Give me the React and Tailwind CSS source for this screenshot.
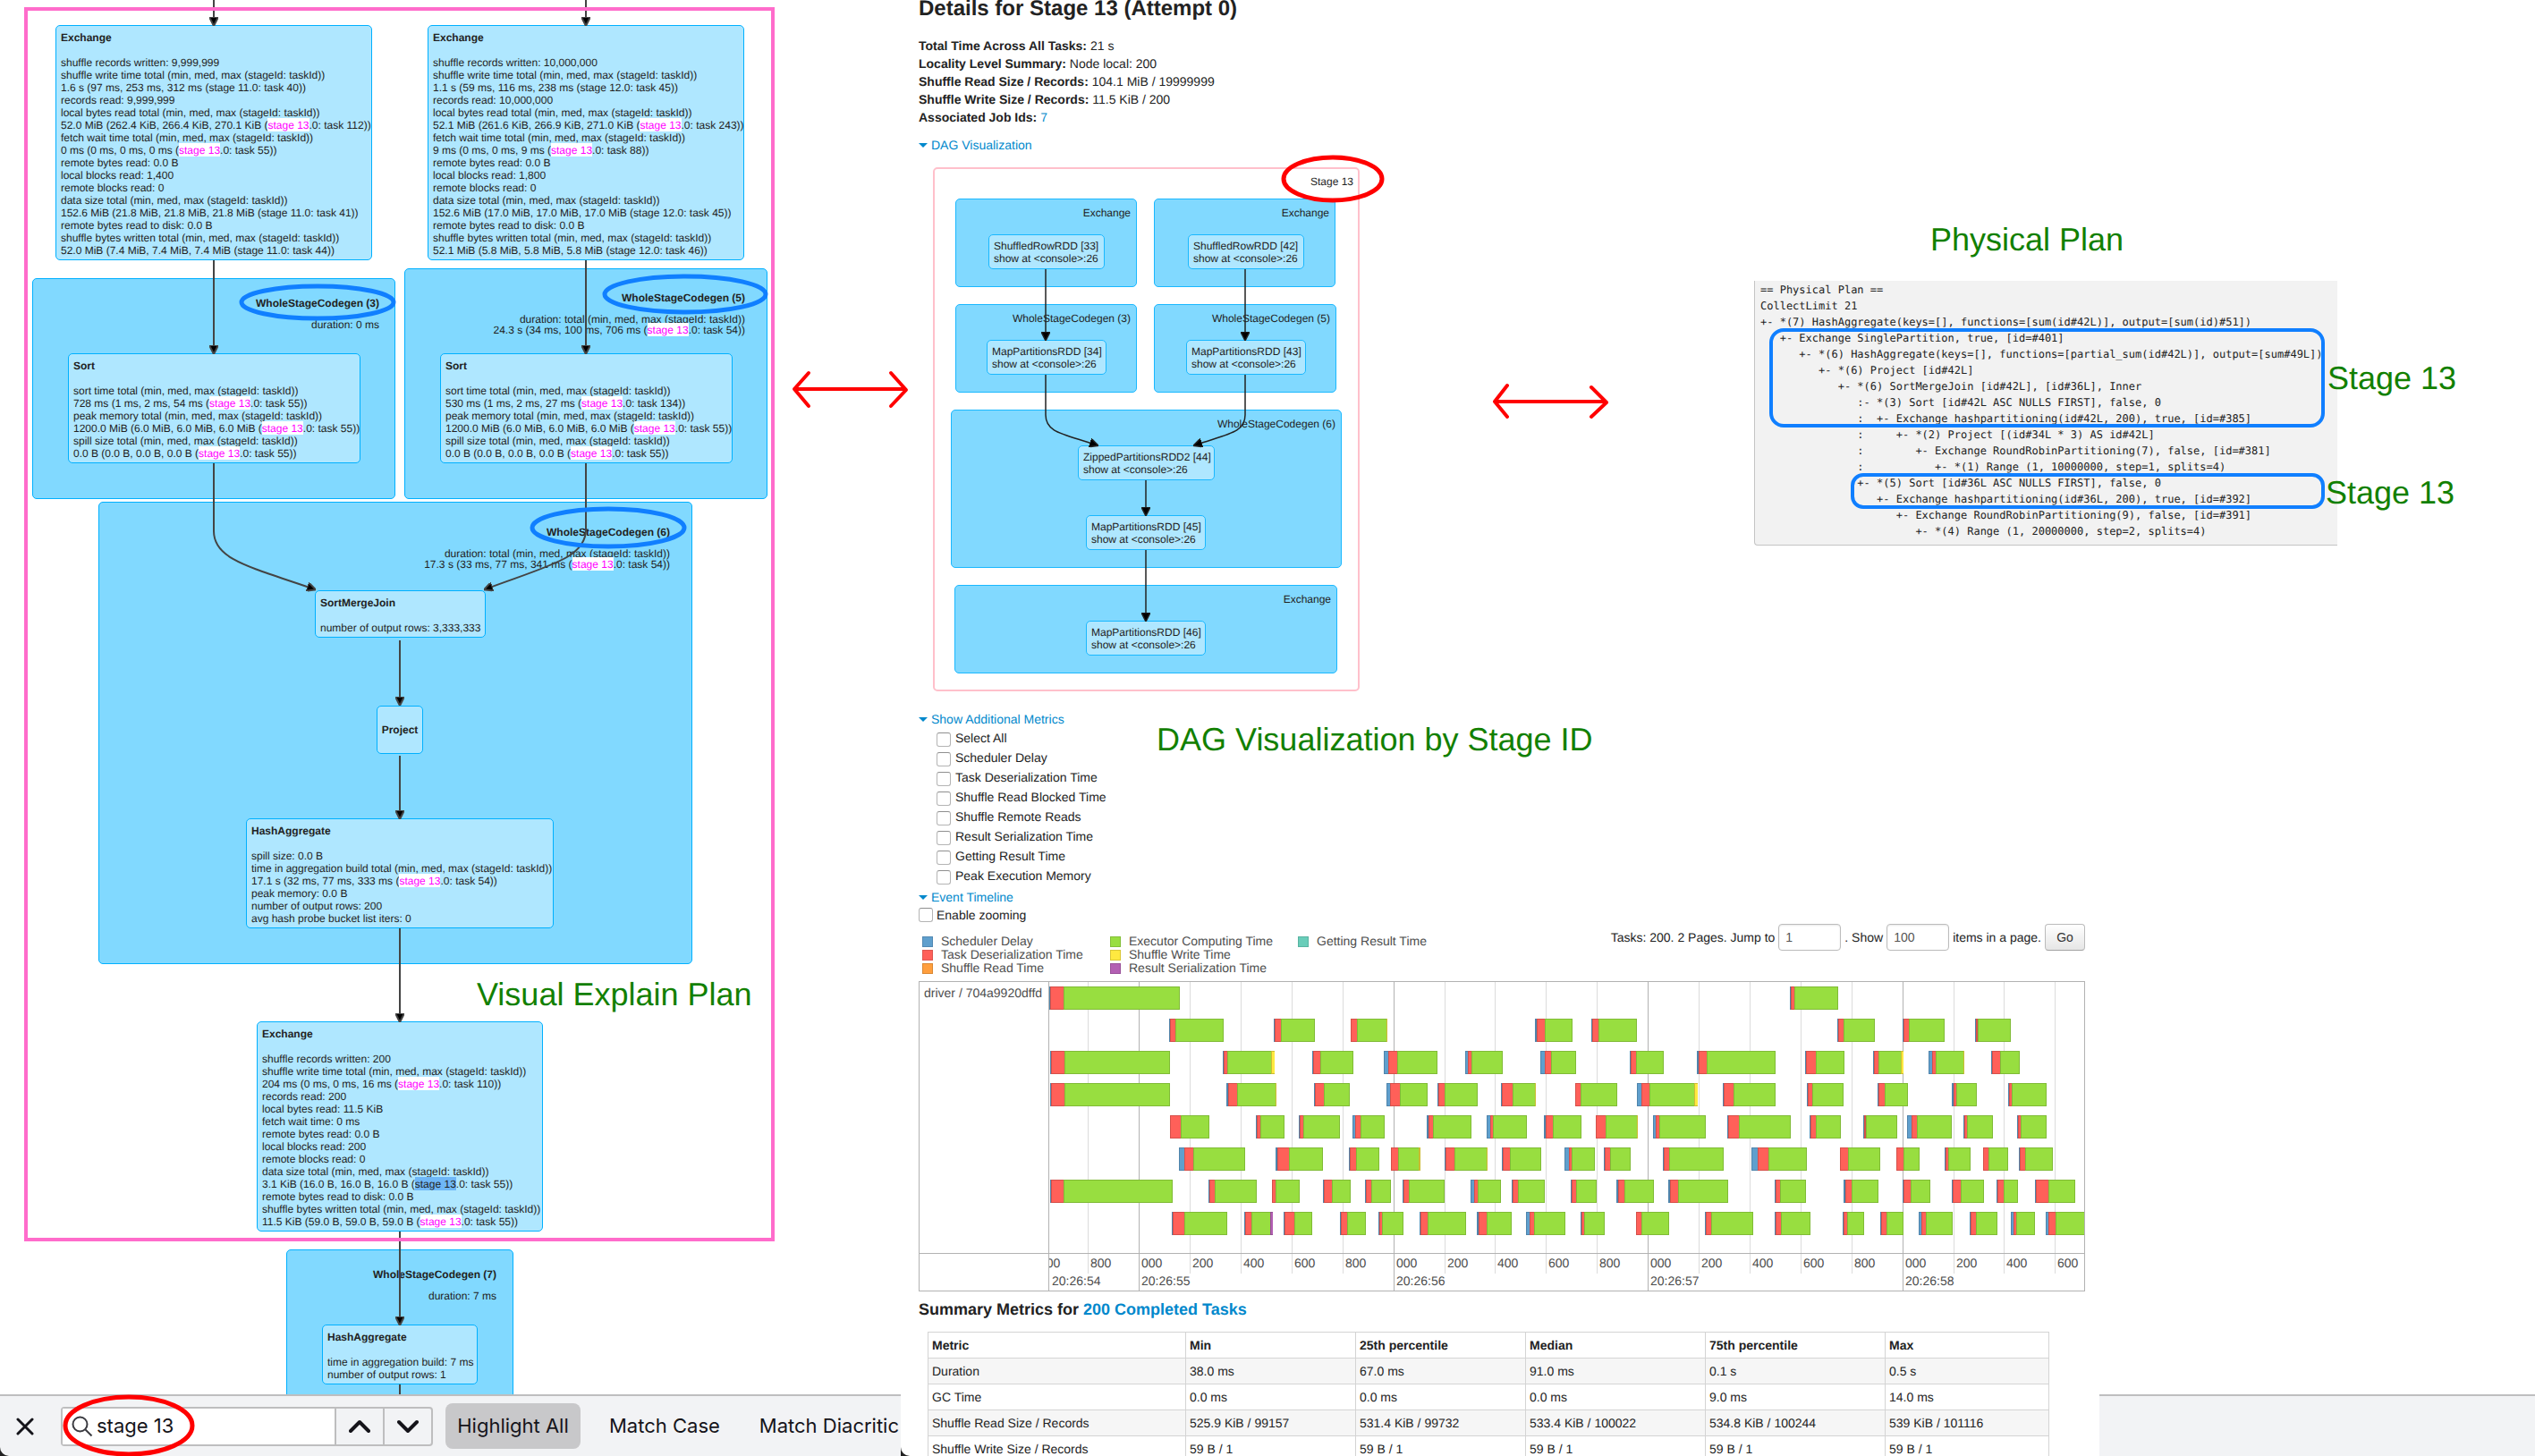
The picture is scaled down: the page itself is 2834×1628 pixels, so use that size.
import React from "react";

const FIND = "stage 13";

/* ---------- shared pieces ---------- */

function Marked({ text }) {
  const selected = text.startsWith("~");
  const line = selected ? text.slice(1) : text;
  const at = line.indexOf(FIND);
  if (at < 0) return line;
  return (
    <>
      {line.slice(0, at)}
      <mark className={selected ? "bg-[#6fb7f7] text-[#222222] pt-px" : "bg-white text-[#ff00ff] pt-px"}>{FIND}</mark>
      {line.slice(at + FIND.length)}
    </>
  );
}

function Cluster({ x, y, w, h }) {
  return (
    <div
      className="absolute rounded-[5px] border border-[#00b0ff] bg-[#81d9ff]"
      style={{ left: x, top: y, width: w, height: h }}
    />
  );
}

function ArrowHead({ id }) {
  return (
    <marker id={id} viewBox="0 0 10 10" refX="9" refY="5" markerUnits="userSpaceOnUse" markerWidth="10" markerHeight="10" orient="auto">
      <path d="M0 0 L10 5 L0 10 Z" fill="#000" />
    </marker>
  );
}

/* ---------- query plan graph ---------- */

const planClusters = [
  { x: 36, y: 311, w: 406, h: 247, right: 424, ly: 332, name: "WholeStageCodegen (3)", lines: ["duration: 0 ms"] },
  {
    x: 452, y: 300, w: 406, h: 258, right: 833, ly: 326, name: "WholeStageCodegen (5)",
    lines: ["duration: total (min, med, max (stageId: taskId))", "24.3 s (34 ms, 100 ms, 706 ms (stage 13.0: task 54))"],
  },
  {
    x: 110, y: 561, w: 664, h: 517, right: 749, ly: 588, name: "WholeStageCodegen (6)",
    lines: ["duration: total (min, med, max (stageId: taskId))", "17.3 s (33 ms, 77 ms, 341 ms (stage 13.0: task 54))"],
  },
  { x: 320, y: 1397, w: 254, h: 200, right: 555, ly: 1418, name: "WholeStageCodegen (7)", lines: ["duration: 7 ms"] },
];

const planNodes = [
  {
    x: 62, y: 28, w: 354, name: "Exchange",
    lines: [
      "shuffle records written: 9,999,999",
      "shuffle write time total (min, med, max (stageId: taskId))",
      "1.6 s (97 ms, 253 ms, 312 ms (stage 11.0: task 40))",
      "records read: 9,999,999",
      "local bytes read total (min, med, max (stageId: taskId))",
      "52.0 MiB (262.4 KiB, 266.4 KiB, 270.1 KiB (stage 13.0: task 112))",
      "fetch wait time total (min, med, max (stageId: taskId))",
      "0 ms (0 ms, 0 ms, 0 ms (stage 13.0: task 55))",
      "remote bytes read: 0.0 B",
      "local blocks read: 1,400",
      "remote blocks read: 0",
      "data size total (min, med, max (stageId: taskId))",
      "152.6 MiB (21.8 MiB, 21.8 MiB, 21.8 MiB (stage 11.0: task 41))",
      "remote bytes read to disk: 0.0 B",
      "shuffle bytes written total (min, med, max (stageId: taskId))",
      "52.0 MiB (7.4 MiB, 7.4 MiB, 7.4 MiB (stage 11.0: task 44))",
    ],
  },
  {
    x: 478, y: 28, w: 354, name: "Exchange",
    lines: [
      "shuffle records written: 10,000,000",
      "shuffle write time total (min, med, max (stageId: taskId))",
      "1.1 s (59 ms, 116 ms, 238 ms (stage 12.0: task 45))",
      "records read: 10,000,000",
      "local bytes read total (min, med, max (stageId: taskId))",
      "52.1 MiB (261.6 KiB, 266.9 KiB, 271.0 KiB (stage 13.0: task 243))",
      "fetch wait time total (min, med, max (stageId: taskId))",
      "9 ms (0 ms, 0 ms, 9 ms (stage 13.0: task 88))",
      "remote bytes read: 0.0 B",
      "local blocks read: 1,800",
      "remote blocks read: 0",
      "data size total (min, med, max (stageId: taskId))",
      "152.6 MiB (17.0 MiB, 17.0 MiB, 17.0 MiB (stage 12.0: task 45))",
      "remote bytes read to disk: 0.0 B",
      "shuffle bytes written total (min, med, max (stageId: taskId))",
      "52.1 MiB (5.8 MiB, 5.8 MiB, 5.8 MiB (stage 12.0: task 46))",
    ],
  },
  {
    x: 76, y: 395, w: 327, name: "Sort",
    lines: [
      "sort time total (min, med, max (stageId: taskId))",
      "728 ms (1 ms, 2 ms, 54 ms (stage 13.0: task 55))",
      "peak memory total (min, med, max (stageId: taskId))",
      "1200.0 MiB (6.0 MiB, 6.0 MiB, 6.0 MiB (stage 13.0: task 55))",
      "spill size total (min, med, max (stageId: taskId))",
      "0.0 B (0.0 B, 0.0 B, 0.0 B (stage 13.0: task 55))",
    ],
  },
  {
    x: 492, y: 395, w: 327, name: "Sort",
    lines: [
      "sort time total (min, med, max (stageId: taskId))",
      "530 ms (1 ms, 2 ms, 27 ms (stage 13.0: task 134))",
      "peak memory total (min, med, max (stageId: taskId))",
      "1200.0 MiB (6.0 MiB, 6.0 MiB, 6.0 MiB (stage 13.0: task 55))",
      "spill size total (min, med, max (stageId: taskId))",
      "0.0 B (0.0 B, 0.0 B, 0.0 B (stage 13.0: task 55))",
    ],
  },
  { x: 352, y: 660, w: 191, name: "SortMergeJoin", lines: ["number of output rows: 3,333,333"] },
  {
    x: 275, y: 915, w: 344, name: "HashAggregate",
    lines: [
      "spill size: 0.0 B",
      "time in aggregation build total (min, med, max (stageId: taskId))",
      "17.1 s (32 ms, 77 ms, 333 ms (stage 13.0: task 54))",
      "peak memory: 0.0 B",
      "number of output rows: 200",
      "avg hash probe bucket list iters: 0",
    ],
  },
  {
    x: 287, y: 1142, w: 320, name: "Exchange",
    lines: [
      "shuffle records written: 200",
      "shuffle write time total (min, med, max (stageId: taskId))",
      "204 ms (0 ms, 0 ms, 16 ms (stage 13.0: task 110))",
      "records read: 200",
      "local bytes read: 11.5 KiB",
      "fetch wait time: 0 ms",
      "remote bytes read: 0.0 B",
      "local blocks read: 200",
      "remote blocks read: 0",
      "data size total (min, med, max (stageId: taskId))",
      "~3.1 KiB (16.0 B, 16.0 B, 16.0 B (stage 13.0: task 55))",
      "remote bytes read to disk: 0.0 B",
      "shuffle bytes written total (min, med, max (stageId: taskId))",
      "11.5 KiB (59.0 B, 59.0 B, 59.0 B (stage 13.0: task 55))",
    ],
  },
  { x: 360, y: 1481, w: 174, name: "HashAggregate", lines: ["time in aggregation build: 7 ms", "number of output rows: 1"] },
];

const planEdges = [
  "M239 0 V28",
  "M655 0 V28",
  "M239 291 V395",
  "M655 291 V395",
  "M447 716 V788",
  "M447 845 V915",
  "M447 1038 V1142",
  "M447 1377 V1481",
  "M239 518 V594 C239 626 280 634 352 659",
  "M655 518 V592 C655 624 614 632 542 659",
];

function PlanGraph() {
  return (
    <section className="relative min-h-0 flex-1 overflow-hidden whitespace-nowrap bg-white text-xs text-[#222222]">
      {planClusters.map((c) => (
        <Cluster key={c.name} {...c} />
      ))}
      {planClusters.map((c) => (
        <div key={c.name} className="absolute text-right" style={{ left: c.x, top: c.ly, width: c.right - c.x }}>
          <h3 className="font-bold leading-[14px]">{c.name}</h3>
          <div className="mt-[11px] leading-3">
            {c.lines.map((l) => (
              <p key={l}><Marked text={l} /></p>
            ))}
          </div>
        </div>
      ))}
      {planNodes.map((n, i) => (
        <article
          key={i}
          className="absolute rounded-[5px] border border-[#00b0ff] bg-[#afe7ff] px-[5px] pt-[6px] pb-[3px] leading-[14px]"
          style={{ left: n.x, top: n.y, width: n.w }}
        >
          <h3 className="mb-[14px] font-bold">{n.name}</h3>
          {n.lines.map((l, k) => (
            <p key={k}><Marked text={l} /></p>
          ))}
        </article>
      ))}
      <article
        className="absolute flex items-center justify-center rounded-[5px] border border-[#00b0ff] bg-[#afe7ff] font-bold"
        style={{ left: 421, top: 789, width: 52, height: 54 }}
      >
        Project
      </article>
      <svg className="absolute inset-0 h-full w-full" fill="none" stroke="#444" strokeWidth="2">
        <defs><ArrowHead id="plan-arrow" /></defs>
        {planEdges.map((d) => (
          <path key={d} d={d} markerEnd="url(#plan-arrow)" />
        ))}
        <path d="M447 1548 V1600" />
      </svg>
      <div className="absolute border-4 border-[#ff6ccb]" style={{ left: 27, top: 8, width: 839, height: 1380 }} />
      <p className="absolute text-4xl text-[#128000]" style={{ left: 533, top: 1092 }}>Visual Explain Plan</p>
    </section>
  );
}

function FindBar() {
  return (
    <form className="flex h-[69px] shrink-0 items-center overflow-hidden whitespace-nowrap border-t-2 border-[#bebebf] bg-[#f2f3f5] font-[Inter,sans-serif] text-[22px] text-[#15141a]">
      <button type="button" aria-label="Close find bar" className="ml-[18px] shrink-0">
        <svg className="h-5 w-5" viewBox="0 0 20 20" fill="none" stroke="currentColor" strokeWidth="3" strokeLinecap="round">
          <path d="M2 2 L18 18 M18 2 L2 18" />
        </svg>
      </button>
      <div className="ml-[30px] flex h-11 w-[416px] shrink-0 rounded border-2 border-[#bebebf]">
        <label className="flex flex-1 items-center bg-white pl-[10px]">
          <svg className="h-6 w-6 shrink-0" viewBox="0 0 24 24" fill="none" stroke="#3a3a40" strokeWidth="2">
            <circle cx="9.500" cy="9.500" r="8" />
            <path d="M15.500 15.500 L22.500 22.500" />
          </svg>
          <input aria-label="Find in page" defaultValue="stage 13" className="ml-1 w-0 flex-1 bg-transparent outline-none" />
        </label>
        <button type="button" aria-label="Previous match" className="flex w-[54px] items-center justify-center border-l-2 border-[#bebebf]">
          <svg className="h-4 w-6" viewBox="0 0 24 16" fill="none" stroke="currentColor" strokeWidth="4" strokeLinecap="round" strokeLinejoin="round">
            <path d="M2 13 L12 3 L22 13" />
          </svg>
        </button>
        <button type="button" aria-label="Next match" className="flex w-[54px] items-center justify-center border-l-2 border-[#bebebf]">
          <svg className="h-4 w-6" viewBox="0 0 24 16" fill="none" stroke="currentColor" strokeWidth="4" strokeLinecap="round" strokeLinejoin="round">
            <path d="M2 3 L12 13 L22 3" />
          </svg>
        </button>
      </div>
      <button type="button" className="ml-[14px] h-[51px] w-[151px] shrink-0 rounded-lg bg-[#c8c8ca]">Highlight All</button>
      <button type="button" className="ml-8 shrink-0">Match Case</button>
      <button type="button" className="ml-11 shrink-0">Match Diacritic</button>
    </form>
  );
}

/* ---------- stage page ---------- */

const facts = [
  ["Total Time Across All Tasks:", "21 s"],
  ["Locality Level Summary:", "Node local: 200"],
  ["Shuffle Read Size / Records:", "104.1 MiB / 19999999"],
  ["Shuffle Write Size / Records:", "11.5 KiB / 200"],
];

const dagClusters = [
  { x: 41, y: 50, w: 203, h: 99, name: "Exchange" },
  { x: 263, y: 50, w: 203, h: 99, name: "Exchange" },
  { x: 41, y: 168, w: 203, h: 99, name: "WholeStageCodegen (3)" },
  { x: 263, y: 168, w: 204, h: 99, name: "WholeStageCodegen (5)" },
  { x: 36, y: 286, w: 437, h: 177, name: "WholeStageCodegen (6)" },
  { x: 40, y: 482, w: 428, h: 99, name: "Exchange" },
];

const dagNodes = [
  { x: 78, y: 90, w: 130, name: "ShuffledRowRDD [33]" },
  { x: 301, y: 90, w: 130, name: "ShuffledRowRDD [42]" },
  { x: 76, y: 208, w: 134, name: "MapPartitionsRDD [34]" },
  { x: 299, y: 208, w: 134, name: "MapPartitionsRDD [43]" },
  { x: 178, y: 326, w: 153, name: "ZippedPartitionsRDD2 [44]" },
  { x: 187, y: 404, w: 134, name: "MapPartitionsRDD [45]" },
  { x: 187, y: 522, w: 134, name: "MapPartitionsRDD [46]" },
];

const dagEdges = [
  "M142 129 V208",
  "M365 129 V208",
  "M142 247 V292 C142 312 162 313 200 326",
  "M365 247 V292 C365 312 346 313 308 326",
  "M254 365 V404",
  "M254 443 V522",
];

function StageDag() {
  return (
    <div className="relative h-[622px] whitespace-nowrap text-xs text-[#222222]">
      <div className="absolute rounded-[5px] border-2 border-[#ffc0cb]" style={{ left: 16, top: 15, width: 477, height: 586 }}>
        <p className="pr-[5px] pt-[7px] text-right leading-[14px]">Stage 13</p>
      </div>
      {dagClusters.map((c, i) => (
        <div
          key={i}
          className="absolute rounded-[5px] border border-[#1ab8ff] bg-[#81d9ff] pt-2 pr-[6px] text-right leading-[14px]"
          style={{ left: c.x, top: c.y, width: c.w, height: c.h }}
        >
          {c.name}
        </div>
      ))}
      {dagNodes.map((n) => (
        <div
          key={n.name}
          className="absolute rounded-[5px] border border-[#1ab8ff] bg-[#afe7ff] px-[5px] pt-[5px] pb-1 leading-[14px]"
          style={{ left: n.x, top: n.y, width: n.w }}
        >
          <p>{n.name}</p>
          <p>{"show at <console>:26"}</p>
        </div>
      ))}
      <svg className="absolute inset-0 h-full w-full" fill="none" stroke="#222" strokeWidth="1.500">
        <defs><ArrowHead id="dag-arrow" /></defs>
        {dagEdges.map((d) => (
          <path key={d} d={d} markerEnd="url(#dag-arrow)" />
        ))}
      </svg>
    </div>
  );
}

function Toggle({ children }) {
  return (
    <a href="#" className="flex items-center gap-1 leading-5 text-[#0088cc]">
      <svg className="h-[5px] w-[10px]" viewBox="0 0 10 5"><path d="M0 0 H10 L5 5 Z" fill="currentColor" /></svg>
      {children}
    </a>
  );
}

const metricNames = [
  "Select All", "Scheduler Delay", "Task Deserialization Time", "Shuffle Read Blocked Time",
  "Shuffle Remote Reads", "Result Serialization Time", "Getting Result Time", "Peak Execution Memory",
];

const boxClass = "h-4 w-4 shrink-0 appearance-none rounded-[3px] border border-[#b4b4b4] border-t-[#8f8f8f] bg-white";

const legend = [
  ["Scheduler Delay", "bg-[#5f9fcd] border-[#5289b3]"],
  ["Executor Computing Time", "bg-[#98de40] border-[#83bf38]"],
  ["Getting Result Time", "bg-[#69cdb9] border-[#58b3a1]"],
  ["Task Deserialization Time", "bg-[#ff6059] border-[#dd5650]"],
  ["Shuffle Write Time", "bg-[#ffe940] border-[#d9c636]"],
  ["", ""],
  ["Shuffle Read Time", "bg-[#ff9e3d] border-[#d98834]"],
  ["Result Serialization Time", "bg-[#b35fb3] border-[#9a529a]"],
];

/* Each task: start, deserialization start, computing start, end, optional tail [start, colour key]. */
const taskRows = [
  [[0, 1, 16, 146], [828, 829, 833, 882]],
  [[134, 135, 141, 195], [251, 252, 259, 297], [337, 337, 344, 378, 377, "y"], [543, 545, 554, 585], [606, 607, 614, 657], [881, 882, 888, 923], [954, 955, 961, 1001], [1035, 1036, 1038, 1075]],
  [[1, 2, 17, 135], [194, 195, 199, 252, 248, "y"], [294, 295, 303, 340], [374, 379, 389, 434], [465, 468, 472, 507], [549, 554, 561, 589], [649, 650, 656, 687], [724, 726, 735, 812], [845, 846, 857, 889], [921, 922, 927, 955, 952, "y"], [983, 987, 991, 1023, 1022, "y"], [1053, 1054, 1063, 1085]],
  [[1, 2, 17, 135], [198, 200, 210, 254, 253, "y"], [296, 297, 307, 336], [377, 381, 392, 423], [434, 435, 442, 479], [505, 506, 518, 544, 543, "y"], [588, 588, 594, 635], [657, 662, 671, 725, 721, "y"], [753, 754, 765, 812], [847, 848, 853, 888], [926, 927, 934, 960], [1009, 1011, 1014, 1037], [1072, 1073, 1076, 1115]],
  [[135, 135, 147, 179], [231, 232, 236, 263], [279, 280, 284, 325], [339, 342, 348, 375], [422, 424, 429, 472], [489, 493, 496, 534], [553, 555, 563, 595], [611, 611, 622, 658, 657, "y"], [675, 678, 682, 734], [758, 759, 771, 829], [850, 851, 857, 885], [910, 911, 913, 948], [959, 964, 970, 1009], [1022, 1023, 1026, 1055], [1082, 1083, 1086, 1115]],
  [[145, 151, 161, 219], [253, 255, 268, 306], [335, 336, 343, 369], [382, 382, 390, 415, 413, "y"], [442, 443, 453, 490, 489, "y"], [506, 507, 515, 550], [576, 581, 584, 610], [620, 621, 627, 650], [686, 687, 693, 754], [785, 792, 804, 847], [884, 884, 893, 929], [947, 947, 955, 973], [1001, 1002, 1005, 1030], [1044, 1044, 1050, 1072], [1084, 1085, 1091, 1122]],
  [[1, 2, 16, 138], [178, 179, 185, 232], [249, 249, 253, 280], [306, 307, 316, 337], [353, 354, 360, 382], [395, 396, 402, 442], [471, 475, 479, 505], [517, 518, 524, 554], [583, 584, 589, 612], [634, 636, 643, 676], [692, 694, 703, 759], [811, 812, 817, 846], [888, 890, 897, 927], [954, 955, 963, 985], [1009, 1010, 1019, 1045], [1059, 1060, 1067, 1083], [1102, 1103, 1117, 1147]],
  [[137, 138, 151, 199], [218, 219, 226, 250, 247, "p"], [262, 263, 274, 294], [325, 326, 333, 354], [368, 369, 372, 396], [414, 415, 423, 466], [478, 480, 489, 517], [533, 537, 542, 577], [594, 595, 598, 621], [656, 656, 662, 693], [733, 734, 740, 787], [811, 812, 818, 851], [887, 888, 892, 911], [929, 930, 936, 955], [972, 975, 980, 1010], [1029, 1030, 1036, 1060], [1075, 1078, 1081, 1102], [1114, 1117, 1125, 1160]],
];

const tint = {
  s: ["#5f9fcd", "#4f84ab"],
  d: ["#ff6059", "#d5504a"],
  c: ["#98de40", "#80bb36"],
  y: ["#ffe940", "#cdbb33"],
  p: ["#b35fb3", "#954f95"],
};

function Span({ from, to, y, kind }) {
  if (to <= from) return null;
  const [fill, edge] = tint[kind];
  return (
    <>
      <rect x={from} y={y} width={to - from} height="26" fill={edge} />
      {to - from > 2 && <rect x={from + 1} y={y + 1} width={to - from - 1} height="24" fill={fill} />}
    </>
  );
}

const ticks = [
  [-14, "600"], [43, "800"], [100, "000"], [157, "200"], [214, "400"], [271, "600"], [328, "800"],
  [385, "000"], [442, "200"], [498, "400"], [555, "600"], [612, "800"], [669, "000"], [726, "200"],
  [783, "400"], [840, "600"], [897, "800"], [954, "000"], [1011, "200"], [1067, "400"], [1124, "600"],
];
const seconds = [[0, "20:26:54"], [100, "20:26:55"], [385, "20:26:56"], [669, "20:26:57"], [954, "20:26:58"]];

function Timeline() {
  return (
    <div className="flex border border-[#b2b2b2] text-sm text-[#4d4d4d]">
      <div className="flex w-[145px] shrink-0 flex-col whitespace-nowrap border-r border-[#b2b2b2]">
        <p className="h-[304px] border-b border-[#b2b2b2] pl-[5px] pt-[2px]">driver / 704a9920dffd</p>
      </div>
      <svg className="h-[345px] min-w-0 flex-1 overflow-hidden" fontSize="14" fill="#4d4d4d">
        {ticks.map(([x, t], i) =>
          t === "000" ? (
            <rect key={i} x={x} y="0" width="1" height="345" fill="#b2b2b2" />
          ) : (
            <rect key={i} x={x} y="0" width="1" height="326" fill="#dcdcdc" />
          )
        )}
        <rect x="0" y="303" width="100%" height="1" fill="#b2b2b2" />
        {taskRows.map((row, r) =>
          row.map(([a, b, c, e, tailAt, tail], i) => (
            <g key={r + "-" + i}>
              <Span from={a} to={b} y={5 + r * 36} kind="s" />
              <Span from={b} to={c} y={5 + r * 36} kind="d" />
              <Span from={c} to={e} y={5 + r * 36} kind="c" />
              {tail ? (
                <Span from={tailAt} to={e} y={5 + r * 36} kind={tail} />
              ) : (
                <rect x={e - 1} y={5 + r * 36} width="1" height="26" fill="#80bb36" />
              )}
            </g>
          ))
        )}
        {ticks.map(([x, t], i) => (
          <text key={i} x={x + 3} y="319">{t}</text>
        ))}
        {seconds.map(([x, t]) => (
          <text key={t} x={x + 3} y="339">{t}</text>
        ))}
      </svg>
    </div>
  );
}

const columns = ["Metric", "Min", "25th percentile", "Median", "75th percentile", "Max"];
const summary = [
  ["Duration", "38.0 ms", "67.0 ms", "91.0 ms", "0.1 s", "0.5 s"],
  ["GC Time", "0.0 ms", "0.0 ms", "0.0 ms", "9.0 ms", "14.0 ms"],
  ["Shuffle Read Size / Records", "525.9 KiB / 99157", "531.4 KiB / 99732", "533.4 KiB / 100022", "534.8 KiB / 100244", "539 KiB / 101116"],
  ["Shuffle Write Size / Records", "59 B / 1", "59 B / 1", "59 B / 1", "59 B / 1", "59 B / 1"],
];

const fieldClass = "h-[30px] w-[70px] rounded border border-[#bcbcbc] bg-white px-[7px] text-[#555555] shadow-[inset_0_1px_2px_#00000018] outline-none";

function StagePage() {
  return (
    <main className="relative z-10 h-screen overflow-hidden rounded-bl-[10px] bg-white pl-5 pr-4 text-sm text-[#222222]">
      <h1 className="text-2xl/5 font-bold">Details for Stage 13 (Attempt 0)</h1>
      <ul className="mt-[21px] leading-5">
        {facts.map(([k, v]) => (
          <li key={k}><strong>{k}</strong> {v}</li>
        ))}
        <li><strong>Associated Job Ids:</strong> <a href="#" className="text-[#0088cc]">7</a></li>
      </ul>
      <div className="mt-[11px]"><Toggle>DAG Visualization</Toggle></div>
      <StageDag />
      <Toggle>Show Additional Metrics</Toggle>
      <ul className="ml-5 leading-[22px]">
        {metricNames.map((m) => (
          <li key={m}>
            <label className="flex items-center gap-[5px]">
              <input type="checkbox" className={boxClass + " mt-1"} />
              {m}
            </label>
          </li>
        ))}
      </ul>
      <div className="mt-[3px]"><Toggle>Event Timeline</Toggle></div>
      <label className="flex items-center gap-1 leading-5">
        <input type="checkbox" className={boxClass} />
        Enable zooming
      </label>
      <div className="flex h-16 items-start justify-between">
        <ul className="ml-1 mt-3 grid grid-cols-[210px_210px_auto] leading-[15px] text-[#4d4d4d]">
          {legend.map(([name, cls]) => (
            <li key={name} className="flex h-[15px] items-center gap-[9px]">
              {name && <span className={"h-3 w-3 border " + cls} />}
              {name}
            </li>
          ))}
        </ul>
        <form className="flex items-center whitespace-nowrap">
          <label className="flex items-center gap-1">Tasks: 200. 2 Pages. Jump to <input className={fieldClass} defaultValue="1" /></label>
          <label className="ml-1 flex items-center gap-1">. Show <input className={fieldClass} defaultValue="100" /></label>
          <span className="ml-1">items in a page.</span>
          <button type="button" className="ml-1 h-[30px] w-[45px] rounded border border-[#bbbbbb] border-b-[#a2a2a2] bg-linear-to-b from-white to-[#e6e6e6] text-[#333333]">Go</button>
        </form>
      </div>
      <Timeline />
      <h2 className="mt-[10px] text-lg/5 font-bold">Summary Metrics for <a href="#" className="text-[#0088cc]">200 Completed Tasks</a></h2>
      <table className="ml-[10px] mt-[15px] w-[1254px] table-fixed border-collapse whitespace-nowrap text-left">
        <colgroup>
          <col className="w-[288px]" />
          <col className="w-[190px]" />
          <col className="w-[190px]" />
          <col className="w-[201px]" />
          <col className="w-[201px]" />
          <col />
        </colgroup>
        <thead>
          <tr className="h-[29px]">
            {columns.map((c) => (
              <th key={c} className="border border-[#d4d4d4] px-1 font-bold">{c}</th>
            ))}
          </tr>
        </thead>
        <tbody>
          {summary.map((row) => (
            <tr key={row[0]} className="h-[29px] odd:bg-[#f6f6f6]">
              {row.map((v, i) => (
                <td key={i} className="border border-[#d4d4d4] px-1">{v}</td>
              ))}
            </tr>
          ))}
        </tbody>
      </table>
      <p className="absolute whitespace-nowrap text-4xl text-[#128000]" style={{ left: 286, top: 807 }}>DAG Visualization by Stage ID</p>
    </main>
  );
}

/* ---------- physical plan ---------- */

const planText = `== Physical Plan ==
CollectLimit 21
+- *(7) HashAggregate(keys=[], functions=[sum(id#42L)], output=[sum(id)#51])
   +- Exchange SinglePartition, true, [id=#401]
      +- *(6) HashAggregate(keys=[], functions=[partial_sum(id#42L)], output=[sum#49L])
         +- *(6) Project [id#42L]
            +- *(6) SortMergeJoin [id#42L], [id#36L], Inner
               :- *(3) Sort [id#42L ASC NULLS FIRST], false, 0
               :  +- Exchange hashpartitioning(id#42L, 200), true, [id=#385]
               :     +- *(2) Project [(id#34L * 3) AS id#42L]
               :        +- Exchange RoundRobinPartitioning(7), false, [id=#381]
               :           +- *(1) Range (1, 10000000, step=1, splits=4)
               +- *(5) Sort [id#36L ASC NULLS FIRST], false, 0
                  +- Exchange hashpartitioning(id#36L, 200), true, [id=#392]
                     +- Exchange RoundRobinPartitioning(9), false, [id=#391]
                        +- *(4) Range (1, 20000000, step=2, splits=4)`;

function PhysicalPlan() {
  return (
    <aside className="absolute z-20 whitespace-nowrap" style={{ left: 1961, top: 248, width: 652 }}>
      <h2 className="ml-[197px] text-4xl text-[#128000]">Physical Plan</h2>
      <pre className="mt-[26px] rounded-bl border-b border-l border-[#c4c4c4] bg-[#f2f2f2] px-[6px] pt-px pb-[6px] font-['DejaVu_Sans_Mono',monospace] text-xs leading-[18px] text-[#222222]">{planText}</pre>
    </aside>
  );
}

/* ---------- annotations drawn over the windows ---------- */

function Annotations() {
  return (
    <>
      <svg className="pointer-events-none absolute inset-0 z-30 h-full w-full" fill="none">
        <g stroke="#107fff" strokeWidth="5">
          <ellipse cx="355" cy="338" rx="85" ry="18" />
          <ellipse cx="766" cy="329" rx="90" ry="20" />
          <ellipse cx="680" cy="590" rx="85" ry="21" />
          <rect x="1980" y="369" width="617" height="107" rx="14" strokeWidth="4" />
          <rect x="2071" y="531" width="526" height="36" rx="12" strokeWidth="4" />
        </g>
        <g stroke="#ff0000" strokeWidth="5">
          <ellipse cx="144" cy="1594" rx="71" ry="32" />
          <ellipse cx="1490" cy="200" rx="55" ry="24" />
        </g>
        <g stroke="#ff0000" strokeWidth="4" strokeLinecap="round" strokeLinejoin="round">
          <path d="M888 435 H1012 M904 417 L888 435 L904 454 M996 417 L1013 436 L996 454" />
          <path d="M1671 449 H1795 M1685 431 L1671 449 L1685 466 M1779 433 L1796 450 L1779 466" />
        </g>
      </svg>
      <p className="absolute z-30 whitespace-nowrap text-4xl text-[#128000]" style={{ left: 2602, top: 403 }}>Stage 13</p>
      <p className="absolute z-30 whitespace-nowrap text-4xl text-[#128000]" style={{ left: 2600, top: 531 }}>Stage 13</p>
    </>
  );
}

export default function App() {
  return (
    <div className="relative grid h-screen grid-cols-[1007fr_1340fr_487fr] overflow-hidden bg-[#222222] font-['Liberation_Sans',Arial,sans-serif] [text-rendering:geometricPrecision]">
      <div className="flex h-screen min-w-0 flex-col overflow-hidden rounded-bl-[10px]">
        <PlanGraph />
        <FindBar />
      </div>
      <StagePage />
      <div className="flex h-screen min-w-0 flex-col bg-white">
        <div className="flex-1" />
        <div className="h-[69px] border-t-2 border-[#bebebf] bg-[#f2f3f5]" />
      </div>
      <PhysicalPlan />
      <Annotations />
    </div>
  );
}
